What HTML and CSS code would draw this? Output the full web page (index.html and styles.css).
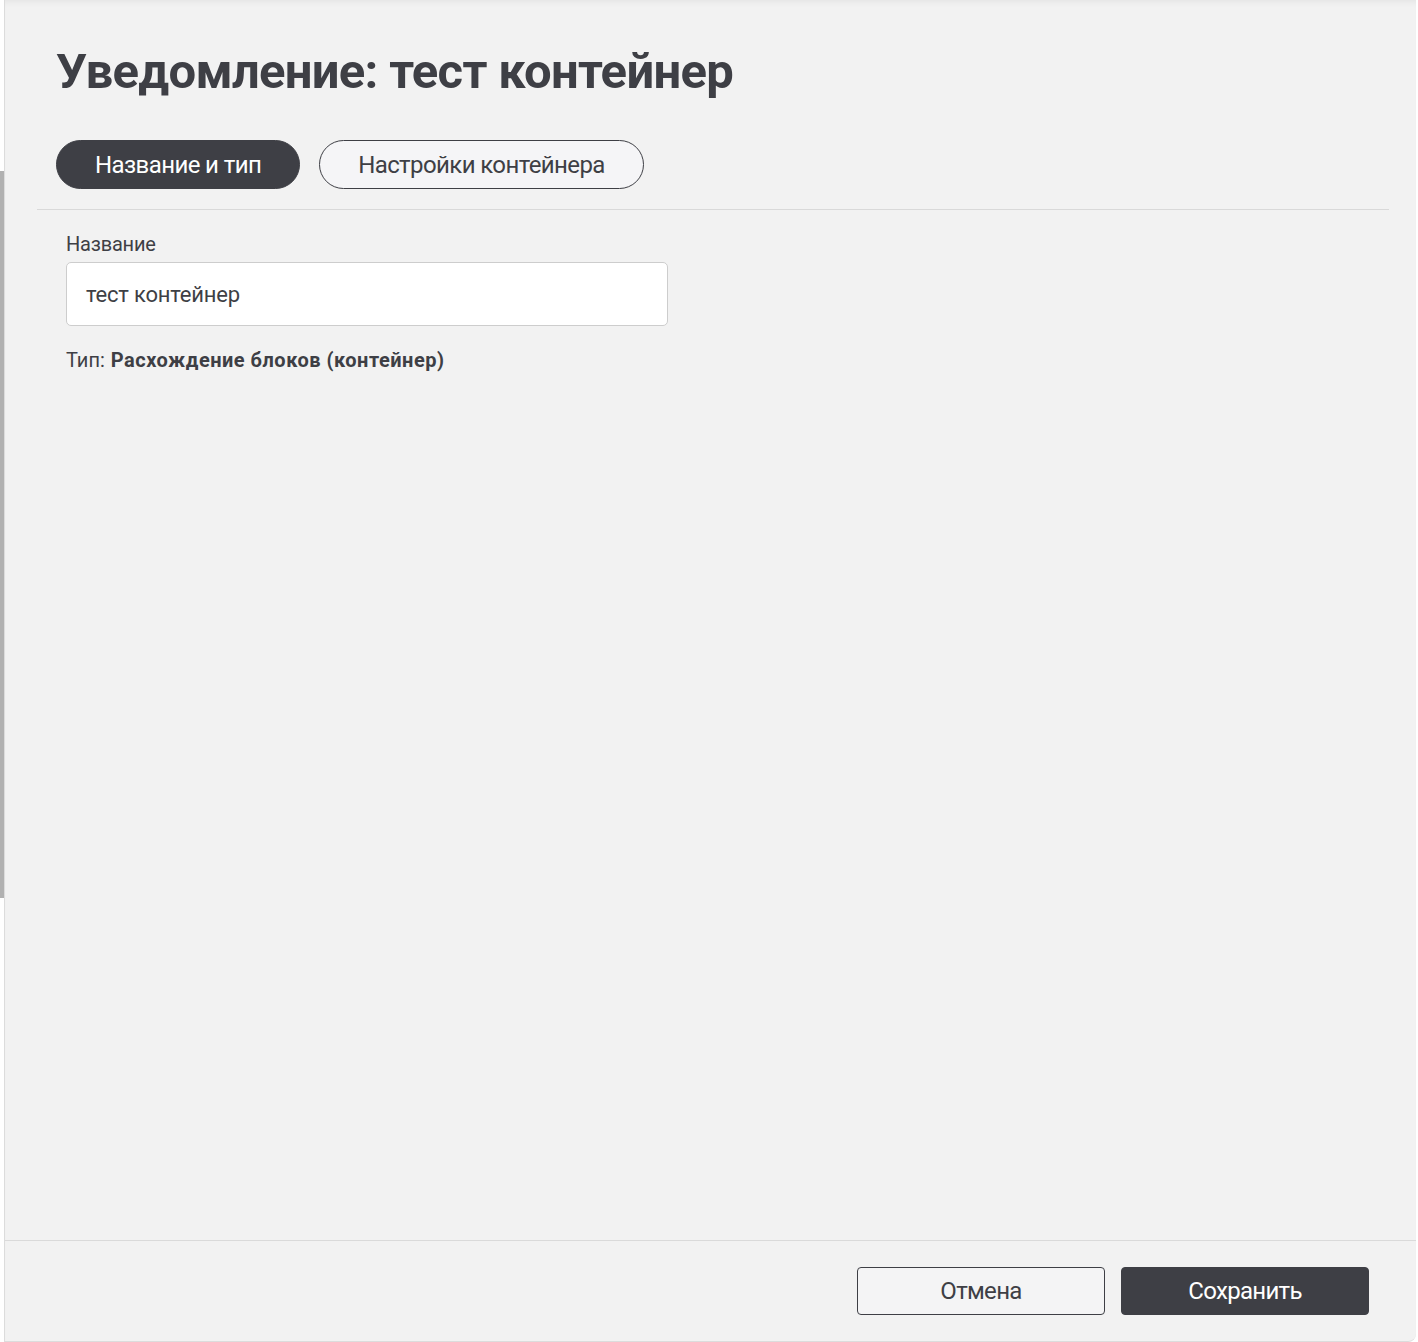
FILE: index.html
```html
<!DOCTYPE html>
<html lang="ru">
<head>
<meta charset="utf-8">
<title>Уведомление: тест контейнер</title>
<link rel="stylesheet" href="styles.css">
</head>
<body>
<div class="page">
  <div class="scroll-track"><div class="scroll-thumb"></div></div>
  <div class="modal">
    <div class="modal-head">
      <h1 class="title">Уведомление: тест контейнер</h1>
      <div class="tabs">
        <button class="tab tab-active">Название и тип</button>
        <button class="tab">Настройки контейнера</button>
      </div>
    </div>
    <div class="modal-body">
      <label class="field-label">Название</label>
      <div class="input">тест контейнер</div>
      <div class="type-line">Тип: <b>Расхождение блоков (контейнер)</b></div>
    </div>
    <div class="modal-foot">
      <button class="btn btn-outline">Отмена</button>
      <button class="btn btn-dark">Сохранить</button>
    </div>
  </div>
</div>
</body>
</html>
```
FILE: styles.css
```css
* { box-sizing: border-box; }
html, body { margin: 0; padding: 0; }
body {
  background: #ffffff;
  font-family: Roboto, "Noto Sans", sans-serif;
  color: #3e3f45;
}
.page {
  display: flex;
  height: 1342px;
  overflow: hidden;
}
.scroll-track {
  width: 4px;
  flex: none;
  padding-top: 171px;
}
.scroll-thumb {
  height: 727px;
  background: #b1b1b1;
}
.modal {
  flex: 1;
  margin-right: 2px;
  background: #f2f2f2;
  border-left: 1px solid #dcdcdc;
  border-bottom: 1px solid #dcdcdc;
  border-bottom-right-radius: 8px;
  display: flex;
  flex-direction: column;
  box-shadow: inset 0 6px 6px -4px rgba(0,0,0,0.06);
}
.modal-head {
  margin: 0 27px 0 32px;
  padding: 40px 0 20px 19px;
  border-bottom: 1px solid #d9d9d9;
}
.title {
  margin: 0;
  font-size: 49px;
  line-height: 64px;
  font-weight: 700;
  letter-spacing: -0.7px;
  color: #3e3f45;
}
.tabs {
  display: flex;
  gap: 19px;
  margin-top: 36px;
}
.tab {
  height: 49px;
  padding: 0 38px;
  border-radius: 25px;
  border: 1px solid #3e3f45;
  background: #f5f5f7;
  font-family: inherit;
  font-size: 24px;
  letter-spacing: -0.6px;
  color: #3e3f45;
  cursor: pointer;
}
.tab-active {
  background: #3e3f45;
  color: #ffffff;
}
.modal-body {
  flex: 1;
  padding: 22px 0 0 61px;
}
.field-label {
  display: block;
  font-size: 20px;
  line-height: 24px;
  letter-spacing: -0.2px;
  color: #3e3f45;
  margin-bottom: 6px;
}
.input {
  width: 602px;
  height: 64px;
  background: #ffffff;
  border: 1px solid #cdcdcd;
  border-radius: 5px;
  padding: 0 19px;
  display: flex;
  align-items: center;
  font-size: 22px;
  letter-spacing: -0.2px;
  color: #3e3f45;
}
.type-line {
  margin-top: 22px;
  font-size: 20px;
  color: #3e3f45;
}
.type-line b {
  font-weight: 700;
  letter-spacing: 0.5px;
  margin-left: 1px;
}
.modal-foot {
  height: 101px;
  border-top: 1px solid #dadada;
  display: flex;
  justify-content: flex-end;
  align-items: flex-start;
  gap: 16px;
  padding: 26px 47px 0 0;
}
.btn {
  width: 248px;
  height: 48px;
  border-radius: 4px;
  font-family: inherit;
  font-size: 24px;
  letter-spacing: -0.7px;
  cursor: pointer;
}
.btn-outline {
  background: #f4f4f5;
  border: 1px solid #3e3f45;
  color: #3e3f45;
}
.btn-dark {
  background: #3e3f45;
  border: 1px solid #3e3f45;
  color: #ffffff;
}
```
